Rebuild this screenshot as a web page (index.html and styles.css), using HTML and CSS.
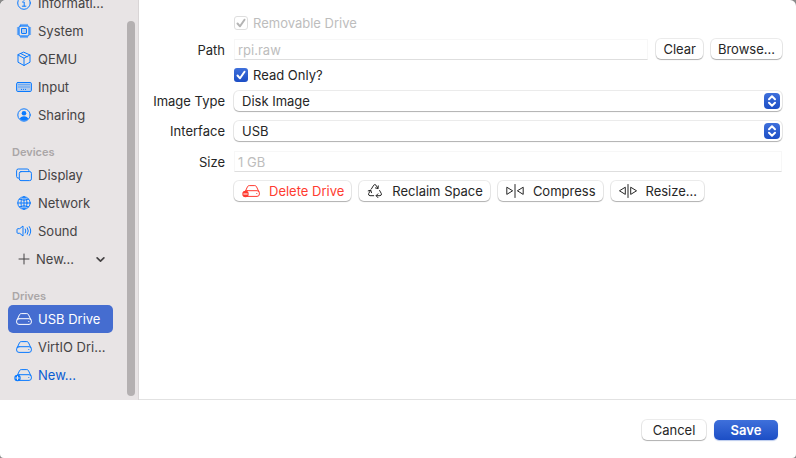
FILE: index.html
```html
<!DOCTYPE html>
<html lang="en">
<head>
<meta charset="utf-8">
<title>USB Drive</title>
<link rel="stylesheet" href="styles.css">
</head>
<body>
<svg class="defs" aria-hidden="true">
  <symbol id="drive" viewBox="0 0 16 12">
    <path d="M1.200 6.600 3.500 1.700Q4 .6 5.200.6h5.600q1.200 0 1.700 1.100l2.300 4.900M3 5.700h10a2.400 2.400 0 0 1 2.400 2.400v.9a2.400 2.400 0 0 1-2.400 2.400H3A2.400 2.400 0 0 1 .6 9v-.9A2.400 2.400 0 0 1 3 5.700z"/>
    <circle class="solid" cx="12.800" cy="8.500" r=".6"/>
  </symbol>
</svg>
<div class="window">
  <div class="content">
    <aside class="sidebar">
      <nav class="list">
        <a class="item" href="#info"><svg class="icon" viewBox="0 0 16 16"><circle cx="8" cy="8" r="6.300"/><path d="M6.500 7h1.700v4M6.300 11.200h3.600"/><circle class="solid" cx="8" cy="4.600" r=".9"/></svg><span>Informati...</span></a>
        <a class="item" href="#system"><svg class="icon" viewBox="0 0 16 16"><rect x="3" y="3" width="10" height="10" rx="1.200"/><rect class="tint" x="5.500" y="5.500" width="5" height="5" rx=".5"/><path d="M5 1.300v1.700M7 1.300v1.700M9 1.300v1.700M11 1.300v1.700M5 13v1.700M7 13v1.700M9 13v1.700M11 13v1.700M1.300 5H3M1.300 7H3M1.300 9H3M1.300 11H3M13 5h1.700M13 7h1.700M13 9h1.700M13 11h1.700"/></svg><span>System</span></a>
        <a class="item" href="#qemu"><svg class="icon" viewBox="0 0 16 16"><path d="M8 1.300 14 4v7.200L8 14.500 2 11.200V4zM2 4l6 3.200L14 4M8 7.200v7.300M5 2.700l6 3"/></svg><span>QEMU</span></a>
        <a class="item" href="#input"><svg class="icon" viewBox="0 0 16 16"><rect class="tint" x=".6" y="3.500" width="14.800" height="9" rx="1.200"/><path class="dots" d="M2.500 5.700h11M2.500 8h11M5 10.400h6"/></svg><span>Input</span></a>
        <a class="item" href="#sharing"><svg class="icon" viewBox="0 0 16 16"><circle cx="8" cy="8" r="6.200"/><circle class="solid" cx="8" cy="6.200" r="2.300"/><path class="solid" d="M3.700 12q1-2.700 4.300-2.700t4.300 2.700Q8 15.400 3.700 12z"/></svg><span>Sharing</span></a>
        <h2 class="heading">Devices</h2>
        <a class="item" href="#display"><svg class="icon" viewBox="0 0 16 16"><path d="M2.700 11.100H2.300A1.700 1.700 0 0 1 .6 9.400V3.700A1.700 1.700 0 0 1 2.300 2h8.900a1.700 1.700 0 0 1 1.700 1.700v.9"/><rect x="3.300" y="4.600" width="12.100" height="9" rx="1.700"/></svg><span>Display</span></a>
        <a class="item" href="#network"><svg class="icon" viewBox="0 0 16 16"><circle cx="8" cy="8" r="6.200"/><ellipse cx="8" cy="8" rx="3" ry="6.200"/><path d="M8 1.800v12.400M1.800 8h12.400M3.300 4.200q4.700 2.300 9.400 0M3.300 11.800q4.700-2.300 9.400 0"/></svg><span>Network</span></a>
        <a class="item" href="#sound"><svg class="icon" viewBox="0 0 16 16"><path d="M1 6.400q0-.7.700-.7h2L7 3v10l-3.300-2.700h-2q-.7 0-.7-.7zM9.300 6q1.200 2 0 4M11.300 4.700q2.100 3.300 0 6.600M13.300 3.600q3 4.400 0 8.800"/></svg><span>Sound</span></a>
        <button class="item item-menu" type="button"><svg class="icon-plus" viewBox="0 0 12 12"><path d="M6 1v10M1 6h10"/></svg><span>New...</span><svg class="chevron" viewBox="0 0 8 8"><path d="M1 2.500 4 5.500 7 2.500"/></svg></button>
        <h2 class="heading">Drives</h2>
        <a class="item selected" href="#usb" aria-current="page"><svg class="icon" viewBox="0 0 16 16"><use href="#drive" y="2" width="16" height="12"/></svg><span>USB Drive</span></a>
        <a class="item" href="#virtio"><svg class="icon" viewBox="0 0 16 16"><use href="#drive" y="2" width="16" height="12"/></svg><span>VirtIO Dri...</span></a>
        <button class="item item-new" type="button"><svg class="icon icon-badge" viewBox="0 0 18 16"><use href="#drive" x="2" y="2" width="16" height="12"/><circle class="badge" cx="3.500" cy="11" r="3.200"/><path class="mark" d="M1.800 11h3.400M3.500 9.300v3.400"/></svg><span>New...</span></button>
      </nav>
      <div class="track"><div class="thumb"></div></div>
    </aside>
    <main class="pane">
      <form class="form">
        <div class="row row-check">
          <label class="check disabled"><input type="checkbox" checked disabled><svg viewBox="0 0 14 14"><path d="M3.500 7.500 6 10.300 10.500 3.700"/></svg>Removable Drive</label>
        </div>
        <div class="row">
          <label class="name" for="path">Path</label>
          <div class="fields"><input class="text" id="path" type="text" value="rpi.raw" disabled><button class="button" type="button">Clear</button><button class="button" type="button">Browse...</button></div>
        </div>
        <div class="row row-check">
          <label class="check"><input type="checkbox" checked><svg viewBox="0 0 14 14"><path d="M3.500 7.500 6 10.300 10.500 3.700"/></svg>Read Only?</label>
        </div>
        <div class="row">
          <label class="name" for="type">Image Type</label>
          <div class="popup"><select id="type"><option>Disk Image</option></select><svg viewBox="0 0 16 16"><path d="M5 6.200 8 3.300l3 2.900M5 9.800l3 2.900 3-2.900"/></svg></div>
        </div>
        <div class="row">
          <label class="name" for="interface">Interface</label>
          <div class="popup"><select id="interface"><option>USB</option></select><svg viewBox="0 0 16 16"><path d="M5 6.200 8 3.300l3 2.900M5 9.800l3 2.900 3-2.900"/></svg></div>
        </div>
        <div class="row">
          <label class="name" for="size">Size</label>
          <div class="fields"><input class="text" id="size" type="text" value="1 GB" disabled></div>
        </div>
        <div class="row">
          <div class="fields actions">
            <button class="button danger" type="button"><svg class="icon icon-badge" viewBox="0 0 18 16"><use href="#drive" x="2" y="2" width="16" height="12"/><circle class="badge" cx="3.500" cy="11" r="3.200"/><path class="mark" d="M1.800 11h3.400"/></svg>Delete Drive</button>
            <button class="button" type="button"><svg class="icon" viewBox="0 0 16 16"><path d="M4.500 5.800 6.700 2.200q1.100-1.300 2.300 0l1.900 3.200M11.300 2.900l-.3 2.700-2.600-.7M12.600 7.500l1.700 3q.7 1.900-1.300 2.200H9.300M10.900 10.800l-1.800 1.900 1.800 1.900M6.700 12.700H3q-2.100-.3-1.300-2.200l2-3.400M1.200 7.900l2.600-.8.700 2.600"/></svg>Reclaim Space</button>
            <button class="button" type="button"><svg class="icon icon-wide" viewBox="0 0 18 16"><path d="M9 1.500v13M.8 4.600v6.800L6.300 8zM17.200 4.600v6.800L11.700 8z"/></svg>Compress</button>
            <button class="button" type="button"><svg class="icon icon-wide" viewBox="0 0 18 16"><path d="M9 1.500v13M6.300 4.600v6.800L.8 8zM11.700 4.600v6.800L17.200 8z"/></svg>Resize...</button>
          </div>
        </div>
      </form>
    </main>
  </div>
  <footer class="footer">
    <button class="button" type="button">Cancel</button>
    <button class="button primary" type="button">Save</button>
  </footer>
</div>
</body>
</html>
```
FILE: styles.css
```css
* { box-sizing: border-box; }

body {
  margin: 0;
  background: #8a8a8a;
  font: 13px/16px Inter, "Liberation Sans", sans-serif;
  color: #262626;
}

button, input, select { font: inherit; color: inherit; margin: 0; }

svg {
  flex: none;
  fill: none;
  stroke: currentColor;
  stroke-linecap: round;
  stroke-linejoin: round;
}

.defs { position: absolute; width: 0; height: 0; }
.solid { fill: currentColor; stroke: none; }
.tint { fill: rgba(10, 122, 255, 0.25); }
.dots { stroke-dasharray: 1 1; stroke-linecap: butt; }
.badge { fill: currentColor; stroke: none; }

.window {
  display: flex;
  flex-direction: column;
  height: 100vh;
  background: #fff;
  border-radius: 6px 6px 4px 4px;
  overflow: hidden;
}

.content { display: flex; flex: 1; min-height: 0; }

/* Sidebar */
.sidebar {
  display: flex;
  flex: none;
  width: 139px;
  padding-right: 3px;
  background: #e8e4e5;
  border-right: 1px solid #d9d5d6;
  overflow: hidden;
}

/* The list is scrolled part of a row up */
.list { flex: 1; margin-top: -11px; padding: 0 14px 0 8px; }

.item {
  display: flex;
  align-items: center;
  gap: 6px;
  width: 100%;
  height: 28px;
  padding: 0 8px;
  border: 0;
  border-radius: 5px;
  background: none;
  color: #454344;
  text-decoration: none;
  white-space: nowrap;
}

.icon { width: 16px; height: 16px; }
.item .icon { color: #0a7aff; }
.icon-badge { width: 18px; }
.item.selected { background: #456dd0; color: #fff; }
.item.selected .icon { color: #fff; }
.item-menu { padding-left: 10px; }
.icon-plus { width: 12px; height: 12px; }
.chevron { width: 9px; height: 9px; margin-left: auto; stroke-width: 1.5; }
.item-new { padding-left: 6px; color: #0a5cd2; }
.item .mark { stroke: #e8e4e5; }

.heading {
  margin: 0;
  height: 32px;
  padding: 15px 4px 0;
  font-size: 11px;
  line-height: 16px;
  font-weight: 600;
  color: #aaa6a7;
}

.track { display: flex; width: 8px; padding: 21px 0 4px; }
.thumb { flex: 1; border-radius: 4px; background: #b4b0b1; }

/* Form */
.pane { flex: 1; min-width: 0; border-bottom: 1px solid #e2e2e2; }

.form {
  display: flex;
  flex-direction: column;
  gap: 10px;
  padding: 17px 14px 0 8px;
}

.row {
  display: grid;
  grid-template-columns: 78px 1fr;
  column-gap: 9px;
  align-items: center;
  height: 20px;
}

.row > :last-child { grid-column: 2; }
.row-check { height: 16px; margin: -2px 0; }
.name { justify-self: end; white-space: nowrap; }
.fields { display: flex; gap: 8px; }

.text {
  flex: 1;
  min-width: 0;
  height: 21px;
  padding: 0 3px;
  border: 1px solid #f7f7f7;
  border-bottom-color: #dedede;
  background: #fff;
}

.text:disabled { color: #bdbdbd; }

.check {
  display: grid;
  grid-template-columns: 14px auto;
  column-gap: 5px;
  align-items: center;
  justify-content: start;
}

.check input {
  grid-area: 1 / 1;
  appearance: none;
  width: 14px;
  height: 14px;
  border-radius: 3px;
  background: linear-gradient(#3f70db, #1c4ec5);
}

.check svg {
  grid-area: 1 / 1;
  z-index: 1;
  width: 14px;
  height: 14px;
  color: #fff;
  stroke-width: 2;
  pointer-events: none;
}

.disabled { color: #bdbdbd; }
.disabled input { background: #fff; border: 1px solid #dedede; }
.disabled svg { color: #b4b4b4; }

.popup { position: relative; height: 20px; }

.popup select {
  display: block;
  width: 100%;
  height: 20px;
  padding: 0 24px 0 8px;
  appearance: none;
}

.popup select, .button {
  border: 0;
  border-radius: 5px;
  background: #fff;
  box-shadow: 0 0 0 1px rgba(0, 0, 0, 0.08), 0 1px 1px rgba(0, 0, 0, 0.25);
}

.popup svg {
  position: absolute;
  top: 2px;
  right: 2px;
  width: 16px;
  height: 16px;
  border-radius: 4px;
  background: linear-gradient(#3f70db, #1c4ec5);
  color: #fff;
  stroke-width: 2;
  pointer-events: none;
}

.button {
  display: flex;
  align-items: center;
  justify-content: center;
  gap: 9px;
  height: 20px;
  padding: 0 7px;
  white-space: nowrap;
}

.actions .button { padding-left: 8px; }
.icon-wide { width: 18px; }
.danger { color: #ff3b30; }
.danger .mark { stroke: #fff; }

/* Footer */
.footer {
  display: flex;
  justify-content: flex-end;
  gap: 8px;
  padding: 20px 18px 18px;
}

.footer .button { width: 64px; }

.footer .primary {
  background: linear-gradient(#3f70db, #1c4ec5);
  box-shadow: 0 1px 1px rgba(28, 78, 197, 0.3);
  color: #fff;
  font-weight: 600;
}
```
